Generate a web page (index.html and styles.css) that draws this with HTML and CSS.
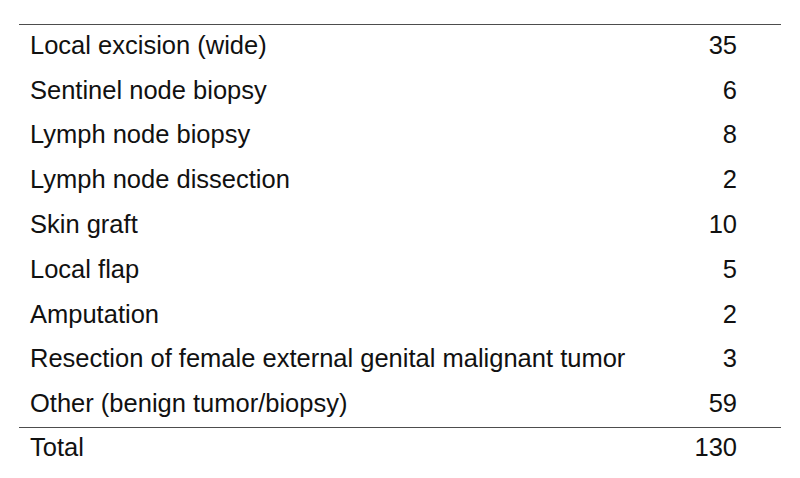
FILE: index.html
```html
<!DOCTYPE html>
<html>
<head>
<meta charset="utf-8">
<link rel="stylesheet" href="styles.css">
</head>
<body>
<div class="page">
<table class="data">
<tbody>
<tr><td class="label">Local excision (wide)</td><td class="num">35</td></tr>
<tr><td class="label">Sentinel node biopsy</td><td class="num">6</td></tr>
<tr><td class="label">Lymph node biopsy</td><td class="num">8</td></tr>
<tr><td class="label">Lymph node dissection</td><td class="num">2</td></tr>
<tr><td class="label">Skin graft</td><td class="num">10</td></tr>
<tr><td class="label">Local flap</td><td class="num">5</td></tr>
<tr><td class="label">Amputation</td><td class="num">2</td></tr>
<tr><td class="label">Resection of female external genital malignant tumor</td><td class="num">3</td></tr>
<tr><td class="label">Other (benign tumor/biopsy)</td><td class="num">59</td></tr>
</tbody>
<tfoot>
<tr class="total"><td class="label">Total</td><td class="num">130</td></tr>
</tfoot>
</table>
</div>
</body>
</html>
```
FILE: styles.css
```css
html, body {
  margin: 0;
  padding: 0;
  background: #ffffff;
}
.page {
  padding: 24px 19px 0 19px;
}
.data {
  width: 762px;
  border-collapse: collapse;
  font-family: "Liberation Sans", Arial, sans-serif;
  font-size: 25.5px;
  color: #111111;
  border-top: 1px solid #4d4d4d;
}
.data tbody tr {
  height: 44.8px;
}
.data td {
  padding: 0 0 4px 0;
  line-height: 28px;
  vertical-align: middle;
}
.data .label {
  padding-left: 11px;
  text-align: left;
}
.data .num {
  padding-right: 44px;
  text-align: right;
}
.data .total {
  height: 38px;
}
.data .total td {
  border-top: 1px solid #4d4d4d;
  padding-bottom: 0;
}
```
